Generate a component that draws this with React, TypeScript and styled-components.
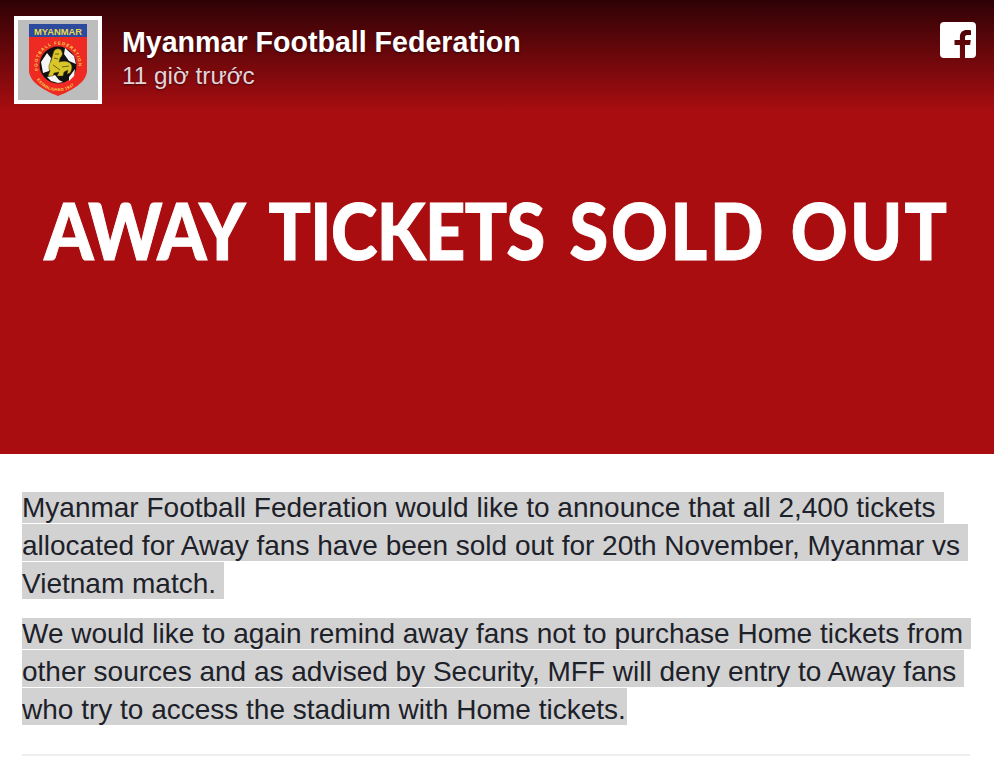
import { FC } from 'react';
import styled, { createGlobalStyle } from 'styled-components';

const GlobalStyle = createGlobalStyle`
  html, body {
    margin: 0;
    padding: 0;
    background: #fff;
  }
  body {
    font-family: "Liberation Sans", Arial, sans-serif;
    overflow: hidden;
  }
`;

const ClubLogo: FC = () => (
  <svg width="80" height="80" viewBox="0 0 80 80">
    <rect width="80" height="80" fill="#bdbdbd" />
    <path d="M11 4h58v13H11z" fill="#2c4a9e" />
    <path d="M11 17h58v33c0 12-14 20-29 26C25 70 11 62 11 50z" fill="#ee2a22" />
    <text x="40" y="14.500" textAnchor="middle" fontSize="9.400" fontWeight="700" fill="#e6d84c" fontFamily="Liberation Sans">
      MYANMAR
    </text>
    <path id="logoTop" d="M20.200 50.300a20.500 20.500 0 1 1 39.600 0" fill="none" />
    <text fontSize="4.400" fontWeight="700" fill="#f6dc50" fontFamily="Liberation Sans" letterSpacing="0.950">
      <textPath href="#logoTop">FOOTBALL FEDERATION</textPath>
    </text>
    <path id="logoBottom" d="M18 58c4 8 12 13 22 13s18-5 22-13" fill="none" />
    <text fontSize="4" fontWeight="700" fill="#f6dc50" fontFamily="Liberation Sans" letterSpacing="0.300">
      <textPath href="#logoBottom" startOffset="3%">ESTABLISHED 1947</textPath>
    </text>
    <circle cx="40" cy="45" r="18.500" fill="#111" />
    <path d="M23 42l6-9 4 5-2 13-6 2zM47 28l9 8 2 8-7-3-5-7zM29 57l8-2 4 5 4 2-5 1-7-2zM51 57l6-8-1 7-5 5z" fill="#f6f6f6" />
    <path
      d="M36 31c2-3 7-3 8 1 1 2 0 4-2 6l-1 4c4-1 8-1 11 1 3 3 2 7 0 10l-3 1 1-4-4 2-1 4h-6l2-4-5 1-1 3h-5l2-5c-2-3-1-7 1-10 1-4 2-7 3-10z"
      fill="#d9c62a"
      stroke="#4b420c"
      strokeWidth="0.500"
    />
    <path d="M37 34h4M36 38l4 1M35 45l7 5M44 47l7-1" stroke="#5f5210" strokeWidth="0.900" fill="none" />
  </svg>
);

const FacebookIcon: FC = () => (
  <svg width="36" height="36" viewBox="0 0 36 36">
    <path
      fillRule="evenodd"
      fill="#fff"
      d="M4 0h28a4 4 0 0 1 4 4v28a4 4 0 0 1-4 4H25V23h5.100l.7-5h-5.800v-2.600c0-1.500.5-2.400 2.500-2.400h3.500V8.200c-.6-.1-2.300-.2-4.200-.2-4.100 0-6.900 2.500-6.900 7v3h-5.400v5h5.400v13H4a4 4 0 0 1-4-4V4a4 4 0 0 1 4-4z"
    />
  </svg>
);

const App: FC = () => {
  return (
    <>
      <GlobalStyle />
      <Page>
        <Banner>
          <Header>
            <Logo>
              <ClubLogo />
            </Logo>
            <Meta>
              <Name>Myanmar Football Federation</Name>
              <Time>11 giờ trước</Time>
            </Meta>
            <Social>
              <FacebookIcon />
            </Social>
          </Header>
          <Headline>
            <HeadlineText>
              <Word $tracking={-2}>AWAY</Word> <Word $tracking={-0.6}>TICKETS</Word> <Word $tracking={3}>SOLD</Word>{' '}
              <Word $tracking={2.4}>OUT</Word>
            </HeadlineText>
          </Headline>
        </Banner>
        <Body>
          <Paragraph>
            <Marked>
              Myanmar Football Federation would like to announce that all 2,400 tickets allocated for Away fans have
              been sold out for 20th November, Myanmar vs Vietnam match.
            </Marked>
          </Paragraph>
          <Paragraph>
            <Marked>
              We would like to again remind away fans not to purchase Home tickets from other sources and as advised by
              Security, MFF will deny entry to Away fans
            </Marked>{' '}
            <Marked $flush>who try to access the stadium with Home tickets.</Marked>
          </Paragraph>
          <Divider />
        </Body>
      </Page>
    </>
  );
};

const Page = styled.div`
  width: 994px;
  height: 760px;
  overflow: hidden;
`;

const Banner = styled.div`
  height: 454px;
  background:
    linear-gradient(to bottom, #2e0206 0, rgba(46, 2, 6, 0) 112px),
    #a90d10;
  display: flex;
  flex-direction: column;
`;

const Header = styled.div`
  display: flex;
  align-items: flex-start;
  padding: 16px 18px 0 14px;
`;

const Logo = styled.div`
  width: 88px;
  height: 88px;
  box-sizing: border-box;
  border: 4px solid #fff;
  margin-right: 20px;
  flex: none;
  svg {
    display: block;
  }
`;

const Meta = styled.div`
  flex: 1;
  padding-top: 9px;
  text-shadow: 0 1px 2px rgba(0, 0, 0, 0.5);
`;

const Name = styled.div`
  color: #fff;
  font-size: 28.600px;
  line-height: 34px;
  font-weight: 700;
`;

const Time = styled.div`
  color: #e2d6dc;
  font-size: 24.300px;
  line-height: 34px;
`;

const Social = styled.div`
  padding-top: 6px;
  svg {
    display: block;
  }
`;

const Headline = styled.div`
  margin-top: 86px;
  display: flex;
  justify-content: center;
  color: #fff;
  font-family: Lato, "Liberation Sans", sans-serif;
  font-weight: 900;
  font-size: 78px;
  line-height: 80px;
  word-spacing: 9px;
  white-space: nowrap;
  -webkit-text-stroke: 1px #fff;
`;

const HeadlineText = styled.div`
  flex: none;
  transform: scaleX(0.9);
`;

const Word = styled.span<{ $tracking: number }>`
  letter-spacing: ${(p) => p.$tracking}px;
`;

const Body = styled.div`
  padding: 35px 22px 0;
  width: 948px;
`;

const Paragraph = styled.p`
  margin: 0 -8px 12px 0;
  color: #1d2129;
  font-size: 28px;
  line-height: 38px;
  clip-path: inset(3px 0 0 0);
`;

const Marked = styled.span<{ $flush?: boolean }>`
  background: #d2d2d2;
  padding: 6px ${(p) => (p.$flush ? 1 : 8)}px 0 0;
  -webkit-box-decoration-break: clone;
  box-decoration-break: clone;
`;

const Divider = styled.div`
  height: 2px;
  margin-top: 25px;
  background: #eeeeee;
`;

export default App;
